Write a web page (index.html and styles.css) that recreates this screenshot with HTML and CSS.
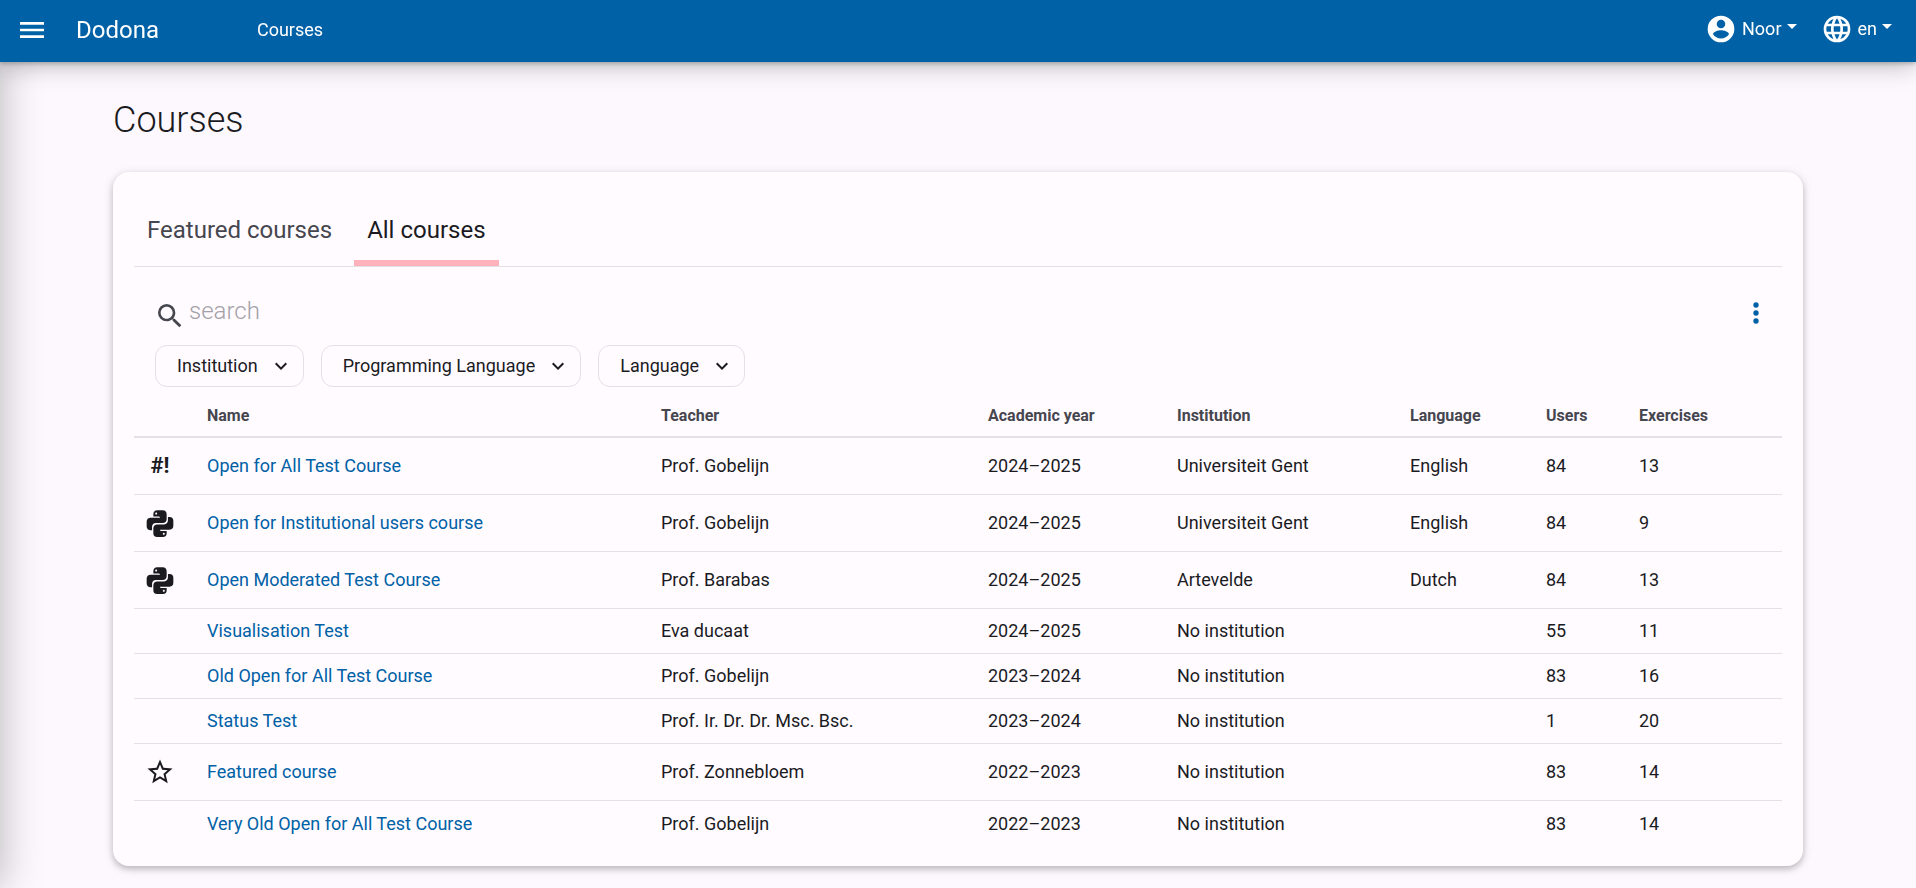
FILE: index.html
```html
<!DOCTYPE html>
<html lang="en">
<head>
    <meta charset="UTF-8">
    <meta name="viewport" content="width=device-width, initial-scale=1.0">
    <title>Courses - Dodona</title>
    <link rel="stylesheet" href="styles.css">
</head>
<body>
    <header class="navbar">
        <button class="drawer-toggle" aria-label="Open menu">
            <svg width="32" height="32" viewBox="0 0 24 24"><path d="M3 6H21V8H3V6M3 11H21V13H3V11M3 16H21V18H3V16Z"/></svg>
        </button>
        <a href="#" class="brand">Dodona</a>
        <a href="#" class="crumb">Courses</a>
        <nav class="nav-right">
            <button class="nav-dropdown">
                <svg width="32" height="32" viewBox="0 0 24 24"><path fill-rule="evenodd" d="M12 2A10 10 0 1 0 12 22A10 10 0 1 0 12 2M12 5A3.2 3.2 0 1 1 12 11.4A3.2 3.2 0 1 1 12 5M12 19.2C9.5 19.2 7.3 17.9 6 16C6 14 10 12.9 12 12.9C14 12.9 18 14 18 16C16.7 17.9 14.5 19.2 12 19.2Z"/></svg>
                <span>Noor</span>
                <span class="caret"></span>
            </button>
            <button class="nav-dropdown">
                <svg width="32" height="32" viewBox="0 0 24 24"><path d="M16.36 14C16.44 13.34 16.5 12.68 16.5 12C16.5 11.32 16.44 10.66 16.36 10H19.74C19.9 10.64 20 11.31 20 12C20 12.69 19.9 13.36 19.74 14M14.59 19.56C15.19 18.45 15.65 17.25 15.97 16H18.92C17.96 17.65 16.43 18.93 14.59 19.56M14.34 14H9.66C9.56 13.34 9.5 12.68 9.5 12C9.5 11.32 9.56 10.65 9.66 10H14.34C14.43 10.65 14.5 11.32 14.5 12C14.5 12.68 14.43 13.34 14.34 14M12 19.96C11.17 18.76 10.5 17.43 10.09 16H13.91C13.5 17.43 12.83 18.76 12 19.96M8 8H5.08C6.03 6.34 7.57 5.06 9.4 4.44C8.8 5.55 8.35 6.75 8 8M5.08 16H8C8.35 17.25 8.8 18.45 9.4 19.56C7.57 18.93 6.03 17.65 5.08 16M4.26 14C4.1 13.36 4 12.69 4 12C4 11.31 4.1 10.64 4.26 10H7.64C7.56 10.66 7.5 11.32 7.5 12C7.5 12.68 7.56 13.34 7.64 14M12 4.03C12.83 5.23 13.5 6.57 13.91 8H10.09C10.5 6.57 11.17 5.23 12 4.03M18.92 8H15.97C15.65 6.75 15.19 5.55 14.59 4.44C16.43 5.07 17.96 6.34 18.92 8M12 2C6.47 2 2 6.5 2 12A10 10 0 0 0 12 22A10 10 0 0 0 22 12A10 10 0 0 0 12 2Z"/></svg>
                <span>en</span>
                <span class="caret"></span>
            </button>
        </nav>
    </header>
    <aside class="drawer"></aside>

    <main class="container">
        <h1>Courses</h1>
        <div class="card">
            <div class="tabs">
                <a href="#" class="tab">Featured courses</a>
                <a href="#" class="tab active">All courses</a>
            </div>

            <div class="search-bar">
                <label for="search">
                    <svg width="32" height="32" viewBox="0 0 24 24"><path d="M9.5 3A6.5 6.5 0 0 1 16 9.5C16 11.11 15.41 12.59 14.44 13.73L14.71 14H15.5L20.5 19L19 20.5L14 15.5V14.71L13.73 14.44C12.59 15.41 11.11 16 9.5 16A6.5 6.5 0 0 1 3 9.5A6.5 6.5 0 0 1 9.5 3M9.5 5C7 5 5 7 5 9.5C5 12 7 14 9.5 14C12 14 14 12 14 9.5C14 7 12 5 9.5 5Z"/></svg>
                </label>
                <input type="text" id="search" placeholder="search" aria-label="Search">
                <button class="actions" aria-label="Actions">
                    <svg width="32" height="32" viewBox="0 0 24 24"><path d="M12 16A2 2 0 0 1 14 18A2 2 0 0 1 12 20A2 2 0 0 1 10 18A2 2 0 0 1 12 16M12 10A2 2 0 0 1 14 12A2 2 0 0 1 12 14A2 2 0 0 1 10 12A2 2 0 0 1 12 10M12 4A2 2 0 0 1 14 6A2 2 0 0 1 12 8A2 2 0 0 1 10 6A2 2 0 0 1 12 4Z"/></svg>
                </button>
            </div>

            <div class="filters">
                <button class="filter">Institution <svg width="24" height="24" viewBox="0 0 24 24"><path d="M7.41 8.58L12 13.17L16.59 8.58L18 10L12 16L6 10L7.41 8.58Z"/></svg></button>
                <button class="filter">Programming Language <svg width="24" height="24" viewBox="0 0 24 24"><path d="M7.41 8.58L12 13.17L16.59 8.58L18 10L12 16L6 10L7.41 8.58Z"/></svg></button>
                <button class="filter">Language <svg width="24" height="24" viewBox="0 0 24 24"><path d="M7.41 8.58L12 13.17L16.59 8.58L18 10L12 16L6 10L7.41 8.58Z"/></svg></button>
            </div>

            <table class="courses">
                <colgroup>
                    <col class="col-icon">
                    <col class="col-name">
                    <col class="col-teacher">
                    <col class="col-year">
                    <col class="col-institution">
                    <col class="col-language">
                    <col class="col-users">
                    <col class="col-exercises">
                </colgroup>
                <thead>
                    <tr>
                        <th></th>
                        <th>Name</th>
                        <th>Teacher</th>
                        <th>Academic year</th>
                        <th>Institution</th>
                        <th>Language</th>
                        <th>Users</th>
                        <th>Exercises</th>
                    </tr>
                </thead>
                <tbody>
                    <tr class="has-icon">
                        <td><span class="shebang">#!</span></td>
                        <td><a href="#">Open for All Test Course</a></td>
                        <td>Prof. Gobelijn</td>
                        <td>2024–2025</td>
                        <td>Universiteit Gent</td>
                        <td>English</td>
                        <td>84</td>
                        <td>13</td>
                    </tr>
                    <tr class="has-icon">
                        <td><svg width="32" height="32" viewBox="0 0 24 24"><path d="M19.14 7.5A2.86 2.86 0 0 1 22 10.36V14.14A2.86 2.86 0 0 1 19.14 17H12C12 17.39 12.32 17.96 12.71 17.96H17V19.64A2.86 2.86 0 0 1 14.14 22.5H9.86A2.86 2.86 0 0 1 7 19.64V15.89C7 14.31 8.28 13.04 9.86 13.04H15.11C16.69 13.04 17.96 11.76 17.96 10.18V7.5H19.14M14.86 19.29C14.46 19.29 14.14 19.59 14.14 20.18C14.14 20.77 14.46 20.89 14.86 20.89A.71 .71 0 0 0 15.57 20.18C15.57 19.59 15.25 19.29 14.86 19.29M4.86 17.5C3.28 17.5 2 16.22 2 14.64V10.86C2 9.28 3.28 8 4.86 8H12C12 7.61 11.68 7.04 11.29 7.04H7V5.36C7 3.78 8.28 2.5 9.86 2.5H14.14C15.72 2.5 17 3.78 17 5.36V9.11C17 10.69 15.72 11.96 14.14 11.96H8.89C7.31 11.96 6.04 13.24 6.04 14.82V17.5H4.86M9.14 5.71C9.54 5.71 9.86 5.41 9.86 4.82C9.86 4.23 9.54 4.11 9.14 4.11C8.75 4.11 8.43 4.23 8.43 4.82C8.43 5.41 8.75 5.71 9.14 5.71Z"/></svg></td>
                        <td><a href="#">Open for Institutional users course</a></td>
                        <td>Prof. Gobelijn</td>
                        <td>2024–2025</td>
                        <td>Universiteit Gent</td>
                        <td>English</td>
                        <td>84</td>
                        <td>9</td>
                    </tr>
                    <tr class="has-icon">
                        <td><svg width="32" height="32" viewBox="0 0 24 24"><path d="M19.14 7.5A2.86 2.86 0 0 1 22 10.36V14.14A2.86 2.86 0 0 1 19.14 17H12C12 17.39 12.32 17.96 12.71 17.96H17V19.64A2.86 2.86 0 0 1 14.14 22.5H9.86A2.86 2.86 0 0 1 7 19.64V15.89C7 14.31 8.28 13.04 9.86 13.04H15.11C16.69 13.04 17.96 11.76 17.96 10.18V7.5H19.14M14.86 19.29C14.46 19.29 14.14 19.59 14.14 20.18C14.14 20.77 14.46 20.89 14.86 20.89A.71 .71 0 0 0 15.57 20.18C15.57 19.59 15.25 19.29 14.86 19.29M4.86 17.5C3.28 17.5 2 16.22 2 14.64V10.86C2 9.28 3.28 8 4.86 8H12C12 7.61 11.68 7.04 11.29 7.04H7V5.36C7 3.78 8.28 2.5 9.86 2.5H14.14C15.72 2.5 17 3.78 17 5.36V9.11C17 10.69 15.72 11.96 14.14 11.96H8.89C7.31 11.96 6.04 13.24 6.04 14.82V17.5H4.86M9.14 5.71C9.54 5.71 9.86 5.41 9.86 4.82C9.86 4.23 9.54 4.11 9.14 4.11C8.75 4.11 8.43 4.23 8.43 4.82C8.43 5.41 8.75 5.71 9.14 5.71Z"/></svg></td>
                        <td><a href="#">Open Moderated Test Course</a></td>
                        <td>Prof. Barabas</td>
                        <td>2024–2025</td>
                        <td>Artevelde</td>
                        <td>Dutch</td>
                        <td>84</td>
                        <td>13</td>
                    </tr>
                    <tr>
                        <td></td>
                        <td><a href="#">Visualisation Test</a></td>
                        <td>Eva ducaat</td>
                        <td>2024–2025</td>
                        <td>No institution</td>
                        <td></td>
                        <td>55</td>
                        <td>11</td>
                    </tr>
                    <tr>
                        <td></td>
                        <td><a href="#">Old Open for All Test Course</a></td>
                        <td>Prof. Gobelijn</td>
                        <td>2023–2024</td>
                        <td>No institution</td>
                        <td></td>
                        <td>83</td>
                        <td>16</td>
                    </tr>
                    <tr>
                        <td></td>
                        <td><a href="#">Status Test</a></td>
                        <td>Prof. Ir. Dr. Dr. Msc. Bsc.</td>
                        <td>2023–2024</td>
                        <td>No institution</td>
                        <td></td>
                        <td>1</td>
                        <td>20</td>
                    </tr>
                    <tr class="has-icon">
                        <td><svg width="30" height="30" viewBox="0 0 24 24"><path d="M12 15.39L8.24 17.66L9.23 13.38L5.91 10.5L10.29 10.13L12 6.09L13.71 10.13L18.09 10.5L14.77 13.38L15.76 17.66M22 9.24L14.81 8.63L12 2L9.19 8.63L2 9.24L7.45 13.97L5.82 21L12 17.27L18.18 21L16.54 13.97L22 9.24Z"/></svg></td>
                        <td><a href="#">Featured course</a></td>
                        <td>Prof. Zonnebloem</td>
                        <td>2022–2023</td>
                        <td>No institution</td>
                        <td></td>
                        <td>83</td>
                        <td>14</td>
                    </tr>
                    <tr>
                        <td></td>
                        <td><a href="#">Very Old Open for All Test Course</a></td>
                        <td>Prof. Gobelijn</td>
                        <td>2022–2023</td>
                        <td>No institution</td>
                        <td></td>
                        <td>83</td>
                        <td>14</td>
                    </tr>
                </tbody>
            </table>
        </div>
    </main>
</body>
</html>
```
FILE: styles.css
```css
* {
    box-sizing: border-box;
}

body {
    margin: 0;
    font-family: Roboto, sans-serif;
    font-size: 18px;
    line-height: 24px;
    color: #1b1b1f;
    background-color: #fcf8fd;
}

a {
    color: #0061a6;
    text-decoration: none;
}

a:hover {
    text-decoration: underline;
}

button {
    padding: 0;
    border: none;
    background: none;
    font: inherit;
    color: inherit;
    cursor: pointer;
}

svg {
    display: block;
    flex-shrink: 0;
    fill: currentColor;
}

/* navbar */
.navbar {
    position: relative;
    z-index: 2;
    display: flex;
    align-items: center;
    height: 62px;
    padding: 0 24px 2px 16px;
    color: #fff;
    background-color: #0061a6;
    box-shadow: 0 2px 4px rgba(0, 0, 0, 0.2), 0 4px 24px rgba(0, 0, 0, 0.25);
}

.navbar a {
    color: #fff;
}

.brand {
    margin-left: 28px;
    font-size: 24px;
}

.crumb {
    margin-left: 98px;
}

.nav-right {
    display: flex;
    gap: 24px;
    margin-left: auto;
    padding-bottom: 3px;
}

.nav-dropdown {
    display: flex;
    align-items: center;
    gap: 5px;
}

.caret {
    margin-bottom: 4px;
    border-top: 5px solid;
    border-left: 5px solid transparent;
    border-right: 5px solid transparent;
}

/* closed drawer, only its shadow is visible */
.drawer {
    position: fixed;
    z-index: 1;
    top: 0;
    bottom: 0;
    left: -280px;
    width: 280px;
    box-shadow: 0 0 40px rgba(0, 0, 0, 0.28);
}

.container {
    max-width: 1690px;
    margin: 0 auto;
    padding-bottom: 22px;
}

h1 {
    margin: 0;
    padding: 37px 0 31px;
    font-size: 36px;
    font-weight: 300;
    line-height: 42px;
}

.card {
    padding: 32px 21px 20px;
    border-radius: 16px;
    background-color: #fffbff;
    box-shadow: 0 3px 6px rgba(0, 0, 0, 0.2), 0 2px 12px rgba(0, 0, 0, 0.1);
}

/* tabs */
.tabs {
    display: flex;
    border-bottom: 1px solid #e4e1e6;
}

.tab {
    padding: 13px 13px 17px;
    border-bottom: 6px solid transparent;
    font-size: 24px;
    line-height: 26px;
    color: #46464f;
}

.tab + .tab {
    margin-left: 9px;
}

.tab.active {
    color: #1b1b1f;
    border-bottom-color: #ffb2bc;
}

/* search */
.search-bar {
    display: flex;
    align-items: center;
    padding: 23px 10px 9px 20px;
}

.search-bar label {
    padding-top: 6px;
    color: #46464f;
}

.search-bar input {
    flex: 1;
    min-width: 0;
    height: 46px;
    padding: 0 0 4px 3px;
    border: none;
    outline: none;
    background: none;
    font-family: inherit;
    font-size: 24px;
    font-weight: 300;
    color: #1b1b1f;
}

.search-bar input::placeholder {
    color: #a3a1a7;
}

.actions {
    color: #0061a6;
}

.filters {
    display: flex;
    gap: 17px;
    padding: 0 21px;
}

.filter {
    display: flex;
    align-items: center;
    gap: 11px;
    height: 42px;
    padding: 0 10px 0 21px;
    border: 1px solid #e4e1e6;
    border-radius: 12px;
}

/* course table */
.courses {
    width: 100%;
    table-layout: fixed;
    border-collapse: separate;
    border-spacing: 0;
}

.col-icon { width: 64px; }
.col-name { width: 454px; }
.col-teacher { width: 327px; }
.col-year { width: 189px; }
.col-institution { width: 233px; }
.col-language { width: 136px; }
.col-users { width: 93px; }
.col-exercises { width: 152px; }

.courses th {
    height: 51px;
    padding: 9px 9px 0;
    border-bottom: 2px solid #e4e1e6;
    font-size: 16px;
    font-weight: 700;
    text-align: left;
    color: #46464f;
}

.courses td {
    height: 45px;
    padding: 0 9px;
    border-bottom: 1px solid #e4e1e6;
}

.courses td:first-child {
    padding: 0 12px 0 0;
    text-align: center;
}

.courses td svg {
    margin: 0 auto;
}

.courses .has-icon td {
    height: 57px;
}

.courses tr:last-child td {
    border-bottom: none;
}

.shebang {
    font-size: 22px;
    font-weight: 700;
}
```
